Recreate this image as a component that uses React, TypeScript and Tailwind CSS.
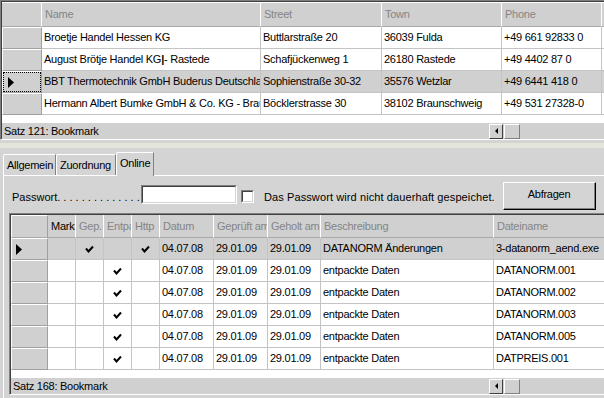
import React from "react";

type Col = { w: string; title: string; dark?: boolean };

const TOP_COLS: Col[] = [
  { w: "w-[219px]", title: "Name" },
  { w: "w-[121px]", title: "Street" },
  { w: "w-[120px]", title: "Town" },
  { w: "w-[100px]", title: "Phone" },
  { w: "w-[90px]", title: "" },
];

const TOP_ROWS: React.ReactNode[][] = [
  ["Broetje Handel Hessen KG", "Buttlarstraße 20", "36039 Fulda", "+49 661 92833 0", ""],
  [
    <>
      August Brötje Handel KG<b>|</b>- Rastede
    </>,
    "Schafjückenweg 1",
    "26180 Rastede",
    "+49 4402 87 0",
    "",
  ],
  ["BBT Thermotechnik GmbH Buderus Deutschland", "Sophienstraße 30-32", "35576 Wetzlar", "+49 6441 418 0", ""],
  ["Hermann Albert Bumke GmbH & Co. KG - Braunschweig", "Böcklerstrasse 30", "38102 Braunschweig", "+49 531 27328-0", ""],
];

const BOTTOM_COLS: Col[] = [
  { w: "w-[28px]", title: "Markiert", dark: true },
  { w: "w-[28px]", title: "Gep." },
  { w: "w-[28px]", title: "Entpackt" },
  { w: "w-[28px]", title: "Http" },
  { w: "w-[54px]", title: "Datum" },
  { w: "w-[54px]", title: "Geprüft am" },
  { w: "w-[53px]", title: "Geholt am" },
  { w: "w-[173px]", title: "Beschreibung" },
  { w: "w-[120px]", title: "Dateiname" },
];

const FILES = [
  { gep: true, entp: false, http: true, text: "DATANORM Änderungen", file: "3-datanorm_aend.exe" },
  { gep: false, entp: true, http: false, text: "entpackte Daten", file: "DATANORM.001" },
  { gep: false, entp: true, http: false, text: "entpackte Daten", file: "DATANORM.002" },
  { gep: false, entp: true, http: false, text: "entpackte Daten", file: "DATANORM.003" },
  { gep: false, entp: true, http: false, text: "entpackte Daten", file: "DATANORM.005" },
  { gep: false, entp: true, http: false, text: "entpackte Daten", file: "DATPREIS.001" },
];

function Pointer() {
  return (
    <svg width="6" height="11" viewBox="0 0 6 11" className="shrink-0">
      <polygon points="0,0 6,5.5 0,11" fill="#000" />
    </svg>
  );
}

function Check() {
  return (
    <svg width="9" height="8" viewBox="0 0 9 8">
      <path d="M1 3.5 L3.5 6.5 L8 1.5" fill="none" stroke="#000" strokeWidth="2" />
    </svg>
  );
}

function HeadCell({ col }: { col: Col }) {
  return (
    <div
      className={`${col.w} shrink-0 h-full border-r border-b border-r-white border-b-[#a8a8a8] pl-[3px] flex items-center overflow-hidden whitespace-nowrap ${
        col.dark ? "text-black" : "text-[#858585]"
      }`}
    >
      {col.title}
    </div>
  );
}

function IndicatorCell({ w, current, focus }: { w: string; current?: boolean; focus?: boolean }) {
  return (
    <div className={`${w} shrink-0 h-full bg-[#d0d0d0] border border-t-white border-l-white border-r-[#a0a0a0] border-b-[#a0a0a0]`}>
      {current && (
        <div
          className={`h-full flex items-center pl-[4px] ${
            focus ? "border border-dotted border-black" : ""
          }`}
        >
          <Pointer />
        </div>
      )}
    </div>
  );
}

function Cell({ w, children, center, sel }: { w: string; children?: React.ReactNode; center?: boolean; sel?: boolean }) {
  return (
    <div
      className={`${w} shrink-0 h-full border-r border-b border-[#c4c4c4] flex items-center overflow-hidden whitespace-nowrap ${
        center ? "justify-center" : "pl-[2px]"
      } ${sel ? "bg-[#d0d0d0]" : "bg-white"}`}
    >
      {children}
    </div>
  );
}

function HScroll() {
  return (
    <div className="flex h-[15px] gap-[1px]">
      <div className="w-[14px] h-full bg-[#d0d0d0] border border-t-white border-l-white border-r-[#404040] border-b-[#404040] flex items-center justify-center">
        <svg width="3" height="6" viewBox="0 0 3 6">
          <polygon points="3,0 0,3 3,6" fill="#000" />
        </svg>
      </div>
      <div className="w-[16px] h-full bg-[#d0d0d0] border border-t-white border-l-white border-r-[#808080] border-b-[#808080]" />
    </div>
  );
}

function StatusBar({ text, w }: { text: string; w: string }) {
  return (
    <div className="h-[16px] bg-[#d0d0d0] flex items-center">
      <span className={`${w} shrink-0 pl-[2px] whitespace-nowrap`}>{text}</span>
      <HScroll />
    </div>
  );
}

function TopGrid() {
  return (
    <div className="h-[140px] border-t border-l border-b border-t-[#808080] border-l-[#808080] border-b-white">
      <div className="h-full border-t border-l border-[#404040] bg-white flex flex-col">
        <div className="h-[25px] flex bg-[#d0d0d0] border-t border-white">
          <div className="w-[40px] shrink-0 h-full border-r border-b border-r-white border-b-[#a8a8a8]" />
          {TOP_COLS.map((c, j) => (
            <HeadCell key={j} col={c} />
          ))}
        </div>
        {TOP_ROWS.map((row, i) => (
          <div key={i} className="h-[22px] flex">
            <IndicatorCell w="w-[40px]" current={i === 2} focus />
            {TOP_COLS.map((c, j) => (
              <Cell key={j} w={c.w} sel={i === 2}>
                {row[j]}
              </Cell>
            ))}
          </div>
        ))}
        <div className="h-[8px]" />
        <StatusBar text="Satz 121: Bookmark" w="w-[487px]" />
      </div>
    </div>
  );
}

function BottomGrid() {
  return (
    <div className="h-[182px] border-t border-l border-b border-t-[#808080] border-l-[#808080] border-b-white">
      <div className="h-full border-t border-l border-[#404040] bg-white flex flex-col">
        <div className="h-[23px] flex bg-[#d0d0d0]">
          <div className="w-[37px] shrink-0 h-full border border-t-white border-l-white border-r-[#a0a0a0] border-b-[#a8a8a8]" />
          {BOTTOM_COLS.map((c) => (
            <HeadCell key={c.title} col={c} />
          ))}
        </div>
        {FILES.map((f, i) => {
          const sel = i === 0;
          return (
            <div key={i} className="h-[22px] flex">
              <IndicatorCell w="w-[37px]" current={sel} />
              <Cell w="w-[28px]" center sel={sel} />
              <Cell w="w-[28px]" center sel={sel}>
                {f.gep && <Check />}
              </Cell>
              <Cell w="w-[28px]" center sel={sel}>
                {f.entp && <Check />}
              </Cell>
              <Cell w="w-[28px]" center sel={sel}>
                {f.http && <Check />}
              </Cell>
              <Cell w="w-[54px]" sel={sel}>04.07.08</Cell>
              <Cell w="w-[54px]" sel={sel}>29.01.09</Cell>
              <Cell w="w-[53px]" sel={sel}>29.01.09</Cell>
              <Cell w="w-[173px]" sel={sel}>{f.text}</Cell>
              <Cell w="w-[120px]" sel={sel}>{f.file}</Cell>
            </div>
          );
        })}
        <div className="h-[8px]" />
        <StatusBar text="Satz 168: Bookmark" w="w-[478px]" />
      </div>
    </div>
  );
}

function Tabs() {
  return (
    <div className="h-[23px] flex items-end pl-[3px]">
      <div className="w-[53px] h-[21px] border-t border-l border-white border-r border-r-[#808080] rounded-tl-[2px] flex items-center pl-[3px]">
        Allgemein
      </div>
      <div className="w-[60px] h-[21px] border-t border-l border-white border-r border-r-[#808080] rounded-tl-[2px] flex items-center pl-[3px]">
        Zuordnung
      </div>
      <div className="relative w-[38px] h-[24px] -mb-px bg-[#d4d4d4] border-t border-l border-white border-r border-r-[#808080] rounded-tl-[2px] flex items-center pl-[3px] pb-[2px]">
        Online
      </div>
    </div>
  );
}

export default function App() {
  return (
    <div className="w-[604px] h-[398px] overflow-hidden bg-[#d4d4d4] text-[11px] leading-none tracking-[-0.25px] text-black font-['Liberation_Sans',Arial,sans-serif]">
      <TopGrid />
      <div className="h-[12px] pt-[3px]">
        <div className="h-[5px] bg-[#e4e4da]" />
      </div>
      <Tabs />
      <div className="h-[223px] ml-[3px] border-t border-l border-white flex flex-col">
        <div className="flex items-start pt-[6px] pl-[8px] h-[34px]">
          <span className="w-[129px] shrink-0 mt-[10px] whitespace-nowrap tracking-normal">Passwort. . . . . . . . . . . . . .</span>
          <div className="mt-[3px] w-[96px] h-[19px] shrink-0 border border-t-[#808080] border-l-[#808080] border-b-white border-r-white">
            <div className="h-full border border-t-[#404040] border-l-[#404040] border-b-[#d4d4d4] border-r-[#d4d4d4] bg-white" />
          </div>
          <div className="mt-[8px] ml-[4px] w-[13px] h-[13px] shrink-0 border border-t-[#808080] border-l-[#808080] border-b-white border-r-white">
            <div className="h-full border border-t-[#404040] border-l-[#404040] border-b-[#d4d4d4] border-r-[#d4d4d4] bg-white" />
          </div>
          <span className="ml-[10px] w-[239px] shrink-0 mt-[10px] whitespace-nowrap tracking-[0.1px]">
            Das Passwort wird nicht dauerhaft gespeichet.
          </span>
          <button
            type="button"
            className="w-[93px] h-[28px] shrink-0 bg-[#d4d4d4] border border-t-white border-l-white border-r-black border-b-black"
          >
            <div className="h-full border-r border-b border-[#808080] flex items-center justify-center pb-[2px]">
              Abfragen
            </div>
          </button>
        </div>
        <div className="mt-[3px] ml-[5px]">
          <BottomGrid />
        </div>
      </div>
    </div>
  );
}
